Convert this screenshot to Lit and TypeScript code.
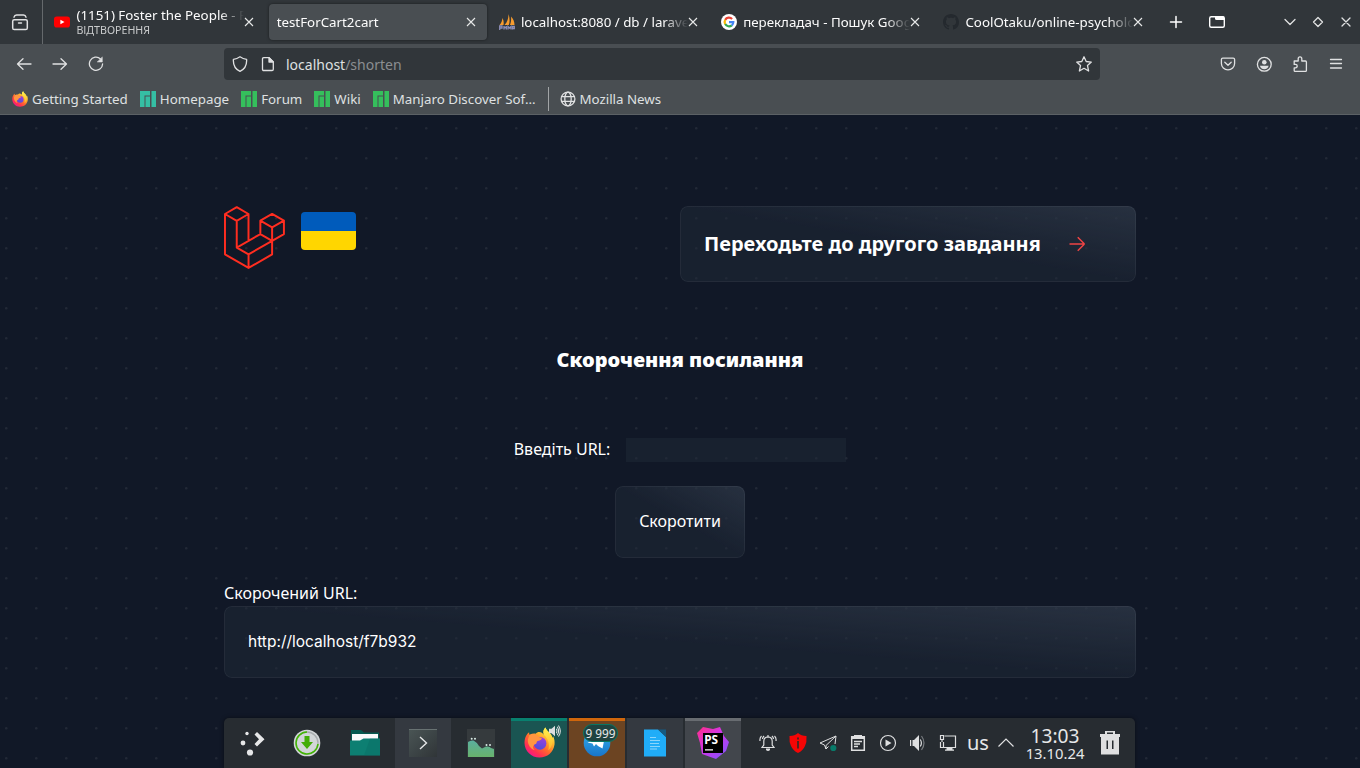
import { LitElement, html, css, svg } from "lit";
import { customElement, property } from "lit/decorators.js";

const closeGlyph = svg`<path d="M-4-4L4 4M4-4L-4 4" />`;

const firefox = (size: number) => html`<svg width=${size} height=${size} viewBox="0 0 32 32">
  <defs>
    <linearGradient id="fx-body" x1="0.85" y1="0.1" x2="0.2" y2="0.95">
      <stop offset="0" stop-color="#fff44f" /><stop offset=".3" stop-color="#ffb02c" />
      <stop offset=".55" stop-color="#ff6a2c" /><stop offset=".8" stop-color="#ff3051" /><stop offset="1" stop-color="#f5158c" />
    </linearGradient>
    <linearGradient id="fx-globe" x1=".7" y1="0" x2=".3" y2="1">
      <stop offset="0" stop-color="#a03fdd" /><stop offset="1" stop-color="#4a4fd8" />
    </linearGradient>
    <linearGradient id="fx-flame" x1=".5" y1="0" x2=".5" y2="1">
      <stop offset="0" stop-color="#fff24f" /><stop offset="1" stop-color="#ffb52a" />
    </linearGradient>
  </defs>
  <path fill="url(#fx-body)" d="M3.2 7.5C4 6.300 5 5.500 5.300 5.300C5.200 6.500 5.500 7.500 6 8C8 7 10 6.500 12 7C15 3.500 19 6 20.500 8C19.500 5 20 2 22.500 0.500C22.500 4 28 5.500 29.500 11C30 10.500 30 10 30 9.500C31.500 12.500 31.800 15 31.500 18C30.500 26 24 31.500 16 31.500C7.500 31.500 0.800 25 0.500 16.500C0.500 13 1.500 9.500 3.200 7.500Z" />
  <circle cx="16.500" cy="16.800" r="6.600" fill="url(#fx-globe)" />
  <path fill="#ff9640" d="M5.500 8.500C8 6.500 12 7.200 13.500 9C15 10.500 17 11 18.500 11.500C18 13.500 15.500 13.800 14 14.500C12.500 15.500 13.500 17 12 17.500C9.500 18 8 22 11.500 24C7 23.500 3.500 18 4 13Z" />
  <path fill="url(#fx-flame)" d="M20.500 8C19.500 5 20 2 22.500 .500C22.500 4 28.500 6.500 29.500 13C30 18 27.500 22.500 25 24C27 18 25 12 20.500 8Z" />
</svg>`;

const manjaro = (color: string) => html`<svg width="16" height="16" viewBox="0 0 16 16">
  <path fill=${color} d="M0 0H10V4.500H4.500V16H0ZM5.500 5.500H10V16H5.500ZM11.500 0H16V16H11.500Z" />
</svg>`;

const favicons: Record<string, unknown> = {
  youtube: html`<svg width="16" height="16" viewBox="0 0 16 16"><rect y="2.500" width="16" height="11" rx="2.800" fill="#f00" /><path fill="#fff" d="M6.400 5.700L10.500 8L6.400 10.300Z" /></svg>`,
  sails: html`<svg width="16" height="16" viewBox="0 0 16 16"><path fill="#f89c2e" d="M.5 11C2.500 9 3.200 6.500 3.500 4C4.500 6 5 8.500 4.500 11ZM5.500 11C8.500 8 9.600 4 9.500 0C10.800 4 11 8 9.800 11ZM11 11C12.200 8 12.300 5 12 2.500C14.500 5 15.500 8 15.500 11Z" /><path fill="none" stroke="#8d8fb8" stroke-width="1.300" d="M.7 16V12H3V14H.7M5 12V15.500M5 13.500H7.300M7.300 12V15.500M9 15.500V12.500L10.500 14L12 12.500V15.500M13.500 15.500V12.500H15.300V14.500H13.500" /></svg>`,
  google: html`<svg width="16" height="16" viewBox="0 0 16 16"><circle cx="8" cy="8" r="8" fill="#fff" /><g fill="none" stroke-width="2.200"><path stroke="#ea4335" d="M4.200 5.900A4.300 4.300 0 0 1 11.100 5" /><path stroke="#fbbc05" d="M4.200 10.100A4.300 4.300 0 0 1 4.200 5.900" /><path stroke="#34a853" d="M4.200 10.100A4.300 4.300 0 0 0 10.800 11.300" /><path stroke="#4285f4" d="M8 8.200H12.300A4.300 4.300 0 0 1 10.800 11.300" /></g></svg>`,
  github: html`<svg width="16" height="16" viewBox="0 0 16 16"><path fill="#24292e" d="M8 0C3.580 0 0 3.580 0 8c0 3.540 2.290 6.530 5.470 7.590.4.070.55-.17.55-.38 0-.19-.01-.82-.01-1.490-2.010.37-2.530-.49-2.690-.94-.09-.23-.48-.94-.82-1.130-.28-.15-.68-.52-.01-.53.63-.01 1.080.58 1.230.82.72 1.210 1.870.87 2.330.66.07-.52.28-.87.51-1.070-1.780-.2-3.640-.89-3.640-3.950 0-.87.31-1.590.82-2.150-.08-.2-.36-1.020.08-2.120 0 0 .67-.21 2.200.82.64-.18 1.320-.27 2-.27s1.360.09 2 .27c1.530-1.040 2.200-.82 2.200-.82.44 1.100.16 1.920.08 2.120.51.56.82 1.270.82 2.150 0 3.070-1.870 3.750-3.650 3.950.29.25.54.73.54 1.480 0 1.070-.01 1.930-.01 2.200 0 .21.15.46.55.38A8.010 8.010 0 0 0 16 8c0-4.420-3.580-8-8-8z" /></svg>`,
};

@customElement("browser-tab")
class BrowserTab extends LitElement {
  @property() label = "";
  @property() note = "";
  @property() icon = "";
  @property({ type: Boolean, reflect: true }) active = false;

  static styles = css`
    :host { display: block; width: 222.25px; height: 44px; padding: 4px 2px; box-sizing: border-box; flex: none; }
    .tab { height: 36px; border-radius: 4px; display: flex; align-items: center; padding: 0 8px; box-sizing: border-box; }
    :host([active]) .tab { background: #494e52; box-shadow: 0 0 3px rgba(0, 0, 0, .5); }
    .icon { display: flex; margin-right: 6px; }
    .text { flex: 1; min-width: 0; overflow: hidden; white-space: nowrap; color: #fcfcfc; font-size: 13.33px; line-height: 18px;
      -webkit-mask-image: linear-gradient(to left, transparent, #000 24px); }
    .text.double { line-height: 16px; margin-top: 1px; }
    .note { font-size: 10.67px; line-height: 15px; color: #c9cbcc; }
    .close { width: 12px; height: 12px; margin: 0 2px 0 -1px; flex: none; overflow: visible; stroke: #e8e9e9; stroke-width: 1.100; fill: none; }
  `;

  render() {
    return html`<div class="tab">
      ${this.icon ? html`<span class="icon">${favicons[this.icon]}</span>` : ""}
      <div class="text ${this.note ? "double" : ""}">${this.label}${this.note ? html`<div class="note">${this.note}</div>` : ""}</div>
      <svg class="close" viewBox="-6 -6 12 12">${closeGlyph}</svg>
    </div>`;
  }
}

@customElement("browser-chrome")
class BrowserChrome extends LitElement {
  static styles = css`
    :host { display: block; height: 115px; background: #494e52; box-sizing: border-box; border-bottom: 1px solid #5c6165; color: #dfe0e1; }
    svg { flex: none; display: block; }
    .line { fill: none; stroke: #e0e1e2; stroke-width: 1.300; stroke-linecap: round; stroke-linejoin: round; }
    .strip { height: 44px; background: #31363a; display: flex; align-items: center; }
    .overview { width: 42px; height: 44px; border-right: 1px solid #65696c; display: flex; align-items: center; justify-content: center; margin-right: 1.4px; }
    .overview svg { margin-right: 3px; }
    .plus { margin-left: 12px; }
    .windows { margin-left: 24px; }
    .controls { margin-left: auto; display: flex; gap: 12px; padding-right: 6px; }
    .bar { height: 40px; display: flex; align-items: center; }
    .nav { display: flex; gap: 20px; padding-left: 16px; width: 208px; }
    .url { width: 876px; height: 32px; background: #31363a; border-radius: 4px; display: flex; align-items: center; padding: 0 8px; box-sizing: border-box; font-size: 14px; }
    .url .page { margin: 0 10px 0 12px; }
    .url .star { margin-left: auto; }
    .path { color: #8b8e91; }
    .tools { margin-left: auto; display: flex; gap: 20px; padding-right: 16px; }
    .marks { display: flex; align-items: center; height: 30px; font-size: 13.33px; padding-left: 12px; white-space: nowrap; }
    .mark { display: flex; align-items: center; gap: 4px; margin-right: 12px; }
    .sep { width: 1px; height: 24px; background: #a2a5a7; margin: 0 11px 0 .5px; }
    .news { gap: 3.500px; }
  `;

  render() {
    return html`
      <div class="strip">
        <div class="overview"><svg class="line" width="18" height="18" viewBox="0 0 18 18"><rect x="1.700" y="6.700" width="14.600" height="9.800" rx="1.600" stroke-width="1.500" /><path d="M3 4.200Q3.500 2 5.500 2H12.500Q14.500 2 15 4.200M7.500 10H10.500" stroke-width="1.400" /></svg></div>
        <browser-tab icon="youtube" label="(1151) Foster the People - P" note="ВІДТВОРЕННЯ"></browser-tab>
        <browser-tab active label="testForCart2cart"></browser-tab>
        <browser-tab icon="sails" label="localhost:8080 / db / larave"></browser-tab>
        <browser-tab icon="google" label="перекладач - Пошук Goog"></browser-tab>
        <browser-tab icon="github" label="CoolOtaku/online-psycholo"></browser-tab>
        <svg class="line plus" width="16" height="16" viewBox="0 0 16 16"><path d="M8 2.500V13.500M2.500 8H13.500" stroke-width="1.500" stroke="#fff" /></svg>
        <svg class="windows" width="18" height="14" viewBox="0 0 18 14"><rect x="1.700" y="1.700" width="14.600" height="10.600" rx="1.500" fill="none" stroke="#fff" stroke-width="1.400" /><path fill="#fff" d="M7 1.500H16V5H8.500Q7 5 7 3.500Z" /></svg>
        <div class="controls">
          <svg class="line" width="16" height="16" viewBox="0 0 16 16"><path d="M3 5.500L8 10.500L13 5.500" /></svg>
          <svg class="line" width="16" height="16" viewBox="0 0 16 16"><path d="M8 3.500L12.500 8L8 12.500L3.500 8Z" /></svg>
          <svg class="line" width="16" height="16" viewBox="0 0 16 16"><path d="M4 4L12 12M12 4L4 12" /></svg>
        </div>
      </div>
      <div class="bar">
        <div class="nav">
          <svg class="line" width="16" height="16" viewBox="0 0 16 16"><path d="M15 8H1.500M7 2.800L1.500 8L7 13.200" /></svg>
          <svg class="line" width="16" height="16" viewBox="0 0 16 16"><path d="M1 8H14.500M9 2.800L14.500 8L9 13.200" /></svg>
          <svg class="line" width="16" height="16" viewBox="0 0 16 16"><path d="M12.500 2.900A6.600 6.600 0 1 0 14.600 8" /><path d="M14.300 1.200V6H9.500Z" fill="#e0e1e2" stroke-width=".5" /></svg>
        </div>
        <div class="url">
          <svg class="line" width="16" height="16" viewBox="0 0 16 16"><path d="M8 .8Q11 3 14.600 3.300C15 9 12 13.500 8 15.300C4 13.500 1 9 1.400 3.300Q5 3 8 .8Z" /></svg>
          <svg class="line page" width="16" height="16" viewBox="0 0 16 16"><path d="M3.800 1.600H9L13.300 6V13.200Q13.300 14.500 12 14.500H3.800Q2.500 14.500 2.500 13.200V2.900Q2.500 1.600 3.800 1.600Z" /><path d="M9 1.600V6H13.300Z" fill="#e0e1e2" /></svg>
          <span>localhost<span class="path">/shorten</span></span>
          <svg class="line star" width="16" height="16" viewBox="0 0 16 16"><path d="M8 .8L10.200 5.500L15.300 6.100L11.500 9.600L12.600 15L8 12.300L3.400 15L4.500 9.600L.7 6.100L5.800 5.500Z" /></svg>
        </div>
        <div class="tools">
          <svg class="line" width="16" height="16" viewBox="0 0 16 16"><path d="M2.800 2.200H13.200Q14.600 2.200 14.600 3.600V7.500A6.600 6.300 0 0 1 1.400 7.500V3.600Q1.400 2.200 2.800 2.200ZM4.800 6.200L8 9.200L11.200 6.200" /></svg>
          <svg class="line" width="16" height="16" viewBox="0 0 16 16"><circle cx="8.300" cy="8.300" r="6.900" /><circle cx="8.300" cy="6.200" r="2.300" fill="#e0e1e2" stroke="none" /><path fill="#e0e1e2" stroke="none" d="M4 9.800H12.600Q12 13.200 8.300 13.200Q4.600 13.200 4 9.800Z" /></svg>
          <svg class="line" width="16" height="16" viewBox="0 0 16 16"><path d="M2.200 5H6.200V2.800Q6.200 .9 8 .9Q9.800 .9 9.800 2.800V5H13.500Q14.400 5 14.400 6V14.500Q14.400 15.400 13.500 15.400H3.100Q2.200 15.400 2.200 14.500V11.800H3.500Q5.200 11.800 5.200 10.100Q5.200 8.400 3.500 8.400H2.200V5Z" /></svg>
          <svg class="line" width="16" height="16" viewBox="0 0 16 16"><path d="M2.500 3.500H13.500M2.500 7.500H13.500M2.500 12H13.500" /></svg>
        </div>
      </div>
      <div class="marks">
        <span class="mark">${firefox(16)}Getting Started</span>
        <span class="mark">${manjaro("#35bfa4")}Homepage</span>
        <span class="mark">${manjaro("#35bf5c")}Forum</span>
        <span class="mark">${manjaro("#35bf5c")}Wiki</span>
        <span class="mark">${manjaro("#35bf5c")}Manjaro Discover Sof…</span>
        <span class="sep"></span>
        <span class="mark news"><svg class="line" width="16" height="16" viewBox="0 0 16 16"><circle cx="8" cy="8" r="6.900" /><ellipse cx="8" cy="8" rx="3.200" ry="6.900" /><path d="M1.500 5.700H14.500M1.500 10.300H14.500" /></svg>Mozilla News</span>
      </div>`;
  }
}

@customElement("shorten-page")
class ShortenPage extends LitElement {
  static styles = css`
    :host { display: block; height: 653px; box-sizing: border-box; padding: 91px 224px 0; color: #fff; font-size: 16px; line-height: 24px;
      background: #111827 url("data:image/svg+xml,%3Csvg width='30' height='30' viewBox='0 0 30 30' fill='none' xmlns='http://www.w3.org/2000/svg'%3E%3Ccircle cx='1.22676' cy='1.22676' r='1.22676' fill='rgba(255,255,255,0.07)'/%3E%3C/svg%3E") 5px 12px; }
    .card { border-radius: 8px; box-sizing: border-box; box-shadow: inset 0 0 0 1px rgba(255, 255, 255, .05);
      background: linear-gradient(to bottom left, rgba(55, 65, 81, .5), rgba(55, 65, 81, 0) 50%) , rgba(31, 41, 55, .5); }
    .top { display: flex; height: 76px; }
    .logo { display: block; width: 61px; height: 64px; }
    .flag { width: 54.5px; height: 38px; border-radius: 4px; margin: 6px 0 0 16px; background: linear-gradient(#005bbb 50%, #ffd600 50%); }
    .next { width: 456px; margin-left: auto; display: flex; align-items: center; padding: 0 24px; }
    .next-title { font-size: 20px; font-weight: 700; line-height: 28px; white-space: nowrap; }
    .arrow { margin-left: 24px; flex: none; }
    .heading { margin: 64px 0 0; text-align: center; font-size: 20px; line-height: 28px; font-weight: 900; }
    .form { display: flex; flex-direction: column; align-items: center; margin-top: 64px; }
    .row { display: flex; align-items: center; gap: 16px; }
    .row span { margin: -2px 0 0; }
    .field { width: 220px; height: 24px; padding: 0; border: 0; background: rgba(31, 41, 55, .5); display: block; box-sizing: border-box; }
    .submit { font: inherit; color: inherit; border: 0; width: 130px; height: 72px; margin-top: 24px; padding: 0 0 2px; }
    .caption { margin: 23px 0 1px; }
    .result { height: 72px; padding: 24px; font-family: Inter, "Noto Sans", sans-serif; font-size: 15.5px; }
  `;

  render() {
    return html`
      <div class="top">
        <svg class="logo" viewBox="0 0 62 65" fill="none" stroke="#ff2d20" stroke-width="2" stroke-linejoin="round">
          <path d="M1 8.100L12.950 1.200L24.900 8.100L12.950 15ZM1 8.100V49.100L24.950 62.900L48.900 49.100V35.500M12.950 15V42.200L24.950 49.100V62.900M24.900 8.100V35.300M12.950 42.200L36.950 28.500L48.900 35.500L24.950 49.100M36.950 14.900L48.900 8L60.900 14.900L48.900 21.800ZM36.950 14.900V28.500M60.900 14.900V28.500L48.900 35.500V21.800" />
        </svg>
        <div class="flag"></div>
        <div class="card next">
          <span class="next-title">Переходьте до другого завдання</span>
          <svg class="arrow" width="24" height="24" viewBox="0 0 24 24" fill="none" stroke="#ef4444" stroke-width="1.500"><path d="M4.500 12h15m0 0l-6.750-6.750M19.500 12l-6.750 6.750" /></svg>
        </div>
      </div>
      <h2 class="heading">Скорочення посилання</h2>
      <div class="form">
        <label class="row"><span>Введіть URL:</span><input class="field" /></label>
        <button class="card submit">Скоротити</button>
      </div>
      <div class="caption">Скорочений URL:</div>
      <div class="card result">http://localhost/f7b932</div>`;
  }
}

@customElement("task-panel")
class TaskPanel extends LitElement {
  static styles = css`
    :host { display: flex; width: 911px; height: 50px; background: #272c31; border-radius: 5px 5px 0 0; box-shadow: 0 0 4px rgba(0, 0, 0, .45); color: #e6e7e8; overflow: hidden; }
    svg { display: block; flex: none; }
    .task { width: 56px; height: 50px; box-sizing: border-box; margin-right: 2px; display: flex; align-items: center; justify-content: center; flex: none; position: relative; }
    .first { margin-right: -1px; }
    .open { background: #343940; }
    .fx { background: #1a5552; border-top: 3px solid #08806f; padding-bottom: 5px; }
    .tg { background: #6c4422; border-top: 3px solid #d0660c; padding-bottom: 3px; }
    .ps { background: #42464c; border-top: 3px solid #686c71; padding-bottom: 3px; margin-right: 0; }
    .sound { position: absolute; right: 6px; top: 4px; }
    .badge { position: absolute; top: 3px; left: 14px; width: 35px; height: 18px; border-radius: 9px; border: 1px solid #087664; background: #204340; box-sizing: border-box; font-size: 11.8px; line-height: 16px; text-align: center; white-space: nowrap; }
    .tray { display: flex; align-items: center; gap: 10px; margin-left: 17px; }
    .pale { fill: none; stroke: #dedfe0; stroke-width: 1.200; }
    .lang { font-size: 20px; width: 22px; line-height: 28px; margin-left: -1px; }
    .caret { margin-left: -3px; }
    .clock { width: 64px; margin-left: 7px; white-space: nowrap; display: flex; flex-direction: column; align-items: center; justify-content: center; }
    .time { font-size: 19.2px; line-height: 20px; }
    .date { font-size: 14.8px; line-height: 15px; }
    .trash { margin: auto 14px auto auto; }
  `;

  render() {
    return html`
      <div class="task first"><svg width="26" height="26" viewBox="0 0 26 26" fill="#e6e7e8"><circle cx="8" cy="3.500" r="1.700" /><circle cx="4" cy="13" r="2.400" /><circle cx="11" cy="22.500" r="3.100" /><path d="M15.500 4.500L18 2L25.500 9.300L18 16.500L15.500 14L20 9.300Z" /></svg></div>
      <div class="task"><svg width="28" height="28" viewBox="0 0 28 28"><circle cx="14" cy="14" r="13.300" fill="#d2d6d8" /><circle cx="14" cy="14" r="11" fill="none" stroke="#a8adaf" stroke-width="1.400" /><path fill="none" stroke="#43b604" stroke-width="1.500" d="M14 3A11 11 0 1 0 25 15" /><path fill="#43ad08" d="M11.500 7H16.500V13H20L14 20L8 13H11.500Z" /></svg></div>
      <div class="task"><svg width="30" height="28" viewBox="0 0 30 28"><path fill="#06594f" d="M1 1H11L14 3.500H29V16H1Z" /><path fill="#fafafa" d="M2 5H28V14H2Z" /><path fill="#0d7f72" d="M0 11.500H10L13.500 9.500H30V26.500H0Z" /><path fill="#0a6b61" d="M20 9.500H30V26.500H14Z" opacity=".35" /></svg></div>
      <div class="task open"><svg width="28" height="28" viewBox="0 0 28 28"><defs><linearGradient id="term" x2="1" y2="1"><stop stop-color="#4a5555" /><stop offset="1" stop-color="#303538" /></linearGradient></defs><rect width="28" height="28" fill="url(#term)" /><path stroke="#687272" d="M0 .5H28" /><path fill="none" stroke="#e6e7e8" stroke-width="1.400" d="M11 8L17.500 14L11 20" /></svg></div>
      <div class="task"><svg width="28" height="28" viewBox="0 0 28 28"><defs><linearGradient id="hill" x2="0" y2="1"><stop stop-color="#5baf9f" /><stop offset="1" stop-color="#68b26c" /></linearGradient></defs><rect width="28" height="28" fill="#353a3d" /><path fill="url(#hill)" d="M1 28V13Q3.500 11 6.500 11.500Q9.500 13 12 17L15 19.500L19 17.500Q23 17 24 19L27 20V28Z" /><g fill="#d8eae4"><circle cx="4.700" cy="9.800" r="1" /><circle cx="8" cy="9.800" r="1" /><circle cx="19.500" cy="16" r="1" /><circle cx="23" cy="16" r="1" /></g></svg></div>
      <div class="task fx">${firefox(31)}<svg class="sound pale" width="12" height="12" viewBox="0 0 14 14"><path fill="#dedfe0" stroke="none" d="M0 4.500H3L7 .8V13.200L3 9.500H0Z" /><path d="M8.500 4.500Q10 7 8.500 9.500M9.500 2Q13 7 9.500 12M11 .5Q15.500 7 11 13.500" /></svg></div>
      <div class="task tg"><svg width="28" height="28" viewBox="0 0 28 28"><defs><linearGradient id="plane" x2="0" y2="1"><stop stop-color="#36b0ec" /><stop offset="1" stop-color="#1875ca" /></linearGradient></defs><circle cx="14" cy="14" r="13.300" fill="url(#plane)" /><path fill="#fff" d="M4.500 13.500L22 7L19.500 19.500L15 17L13 15L11 17.500L9.500 14.500Z" /></svg><span class="badge">9 999</span></div>
      <div class="task open"><svg width="22" height="28" viewBox="0 0 22 28"><path fill="#20adf8" d="M0 .5H14L22 8V27.500H0Z" /><path fill="#155b82" d="M14 .5H22V8Z" /><path stroke="#8bd5fb" stroke-width="1.100" d="M6 8.500H12M6 11.500H16M6 14.500H15M6 17.500H16M6 20H13" /></svg></div>
      <div class="task ps"><svg width="32" height="32" viewBox="0 0 32 32"><defs><linearGradient id="storm" x2="1" y2="1"><stop stop-color="#ff2d85" /><stop offset=".45" stop-color="#d236e9" /><stop offset="1" stop-color="#7656ff" /></linearGradient></defs><path fill="url(#storm)" d="M0 6L6 0L16 2L23 0L27 9L32 15L29 24L19 32L5 27L3 16Z" /><rect x="6" y="6" width="20" height="20" fill="#000" /><text x="7.300" y="17" font-size="11.800" font-weight="700" fill="#fff">PS</text><path fill="#fff" d="M8 22.300H16V23.600H8Z" /></svg></div>
      <div class="tray">
        <svg class="pale" width="20" height="20" viewBox="0 0 20 20"><path d="M4 14.500H16L14.200 12V8Q14 4 10 3.800Q6 4 5.800 8V12ZM10 2V4M2 8Q1.500 5 3.500 3M4.500 6Q4.500 4.500 6 3M18 8Q18.500 5 16.500 3M15.500 6Q15.500 4.500 14 3" /><path fill="#dedfe0" stroke="none" d="M8 15.500H12V17Q10 19 8 17Z" /></svg>
        <svg width="20" height="20" viewBox="0 0 20 20"><path fill="#f60505" d="M10 0Q13 3 18.500 3Q19 9 17 13Q15 17.500 10 20Q5 17.500 3 13Q1 9 1.500 3Q7 3 10 0Z" /><path stroke="#54231f" stroke-width="2" d="M10 4.500V6.500M10 8V15.500" /></svg>
        <svg class="pale" width="20" height="20" viewBox="0 0 20 20" stroke-linejoin="round"><path stroke-width="1" d="M18 3L2 10L6.500 12L8 16L10.500 13.500M18 3L17 11M18 3L8 12.500V16" /><circle cx="15.300" cy="15" r="3.100" fill="#087b6a" stroke="none" /></svg>
        <svg class="pale" width="20" height="20" viewBox="0 0 20 20"><path d="M3.700 3.700H16.300V17.300H3.700ZM6 8.500H14M6 11H12M6 13.500H10" stroke-width="1.500" /><path fill="#dedfe0" stroke="none" d="M3 3H6V2H14V3H17V6H3Z" /></svg>
        <svg class="pale" width="20" height="20" viewBox="0 0 20 20"><circle cx="10" cy="10" r="7.500" /><path fill="#dedfe0" stroke="none" d="M7.500 6.500L13.500 10L7.500 13.500Z" /></svg>
        <svg class="pale" width="20" height="20" viewBox="0 0 20 20"><path fill="#dedfe0" stroke="none" d="M2 7H3.200V13H2ZM4.500 7H6L11 2V18L6 13H4.500Z" /><path d="M12.300 6.500Q14.500 10 12.300 13.500" /><path stroke="#777b7f" d="M13.500 3Q18.500 10 13.500 17" /></svg>
        <svg class="pale" width="20" height="20" viewBox="0 0 20 20"><path d="M6.500 3H17.500V14.500H5.500V9M2.500 2.500H5.500V6.500H2.500ZM4 6.500V9M2.500 9V14.500H5" /><path fill="#dedfe0" stroke="none" d="M8.500 15H14.500V16.500H16V17.800H7V16.500H8.500Z" /></svg>
        <span class="lang">us</span>
        <svg class="pale caret" width="20" height="20" viewBox="0 0 20 20"><path d="M2.500 13.500L10 6L17.500 13.500" /></svg>
      </div>
      <div class="clock"><div class="time">13:03</div><div class="date">13.10.24</div></div>
      <svg class="trash" width="22" height="24" viewBox="0 0 22 24"><path fill="#dedfe0" fill-rule="evenodd" d="M1 3H6V0H16V3H21V6H20V23.500H2V6H1ZM8 1.500V3H14V1.500ZM7.500 9.500V18H9V9.500ZM13 9.500V18H14.500V9.500Z" /></svg>`;
  }
}

@customElement("app-root")
class AppRoot extends LitElement {
  static styles = css`
    :host { display: block; position: relative; width: 1360px; height: 768px; overflow: hidden; font-family: "Noto Sans", sans-serif; }
    .panel { position: absolute; left: 224px; bottom: 0; }
  `;

  render() {
    return html`<browser-chrome></browser-chrome><shorten-page></shorten-page><task-panel class="panel"></task-panel>`;
  }
}
